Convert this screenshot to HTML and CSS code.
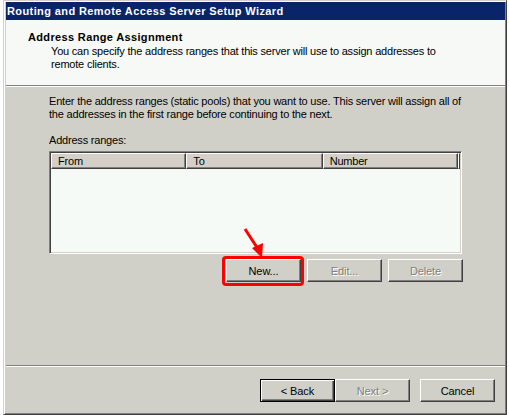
FILE: index.html
```html
<!DOCTYPE html>
<html>
<head>
<meta charset="utf-8">
<link rel="stylesheet" href="styles.css">
</head>
<body>
<div class="window">
  <div class="titlebar">Routing and Remote Access Server Setup Wizard</div>
  <div class="header">
    <div class="h-title">Address Range Assignment</div>
    <div class="h-desc">You can specify the address ranges that this server will use to assign addresses to remote clients.</div>
  </div>
  <div class="content">
    <p class="intro">Enter the address ranges (static pools) that you want to use. This server will assign all of the addresses in the first range before continuing to the next.</p>
    <div class="label">Address ranges:</div>
    <div class="list">
      <div class="list-head">
        <div class="col c1">From</div>
        <div class="col c2">To</div>
        <div class="col c3">Number</div>
        <div class="col c4"></div>
      </div>
    </div>
    <div class="list-buttons">
      <div class="highlight-wrap">
        <button class="btn">New...</button>
        <span class="highlight"></span>
        <svg class="arrow" width="30" height="34" viewBox="0 0 30 34">
          <line x1="3" y1="2" x2="16" y2="22" stroke="#ff0000" stroke-width="3"/>
          <polygon points="10,21 21,16 20,31" fill="#ff0000"/>
        </svg>
      </div>
      <button class="btn disabled">Edit...</button>
      <button class="btn disabled">Delete</button>
    </div>
  </div>
  <div class="footer">
    <button class="btn default">&lt; Back</button>
    <button class="btn disabled">Next &gt;</button>
    <button class="btn cancel">Cancel</button>
  </div>
</div>
</body>
</html>
```
FILE: styles.css
```css
html, body {
  margin: 0;
  padding: 0;
  background: #ffffff;
  width: 509px;
  height: 417px;
  overflow: hidden;
}
body {
  font-family: "Liberation Sans", Arial, sans-serif;
  font-size: 11px;
  letter-spacing: -0.2px;
  color: #000;
}
.window {
  margin-left: 3px;
  width: 504px;
  height: 415px;
  box-sizing: border-box;
  background: #d0d0c8;
  border-top: 1px solid #d4d0c8;
  border-left: 1px solid #d4d0c8;
  border-right: 1px solid #404040;
  border-bottom: 1px solid #404040;
  box-shadow: inset 1px 1px 0 #ffffff, inset -1px -1px 0 #808080;
  padding: 1px 1px 1px 2px;
  display: flex;
  flex-direction: column;
}
.titlebar {
  height: 18px;
  background: #0a246a;
  color: #fff;
  font-weight: bold;
  font-size: 11px;
  letter-spacing: 0.4px;
  line-height: 18px;
  padding-left: 1px;
}
.header {
  height: 66px;
  background: #f6f9f5;
  border-bottom: 1px solid #808080;
  box-shadow: 0 1px 0 #ffffff;
  padding-left: 22px;
  box-sizing: border-box;
  padding-top: 11px;
}
.h-title {
  font-weight: bold;
  letter-spacing: 0.35px;
  line-height: 13px;
}
.h-desc {
  margin-left: 23px;
  margin-top: 1px;
  line-height: 13px;
  width: 400px;
}
.content {
  flex: 1;
  padding-left: 43px;
  border-bottom: 1px solid #808080;
  box-shadow: 0 1px 0 #ffffff;
  margin-top: 1px;
}
.intro {
  margin: 8px 0 0 0;
  line-height: 13px;
  width: 420px;
}
.label {
  margin-top: 13px;
  line-height: 13px;
}
.list {
  margin-top: 4px;
  width: 413px;
  height: 103px;
  box-sizing: border-box;
  background: #f6faf6;
  border-top: 1px solid #808080;
  border-left: 1px solid #808080;
  border-right: 1px solid #ffffff;
  border-bottom: 1px solid #ffffff;
  box-shadow: inset 1px 1px 0 #404040, inset -1px -1px 0 #d4d0c8;
  padding: 1px;
}
.list-head {
  display: flex;
  height: 16px;
}
.col {
  box-sizing: border-box;
  height: 16px;
  background: #d4d0c8;
  border-top: 1px solid #ffffff;
  border-left: 1px solid #ffffff;
  border-right: 1px solid #404040;
  border-bottom: 1px solid #404040;
  box-shadow: inset -1px -1px 0 #808080;
  padding-left: 6px;
  line-height: 14px;
}
.c1 { width: 136px; }
.c2 { width: 137px; }
.c3 { width: 136px; }
.c4 { width: 0; flex: 1; padding: 0; }
.list-buttons {
  display: flex;
  justify-content: flex-end;
  gap: 6px;
  width: 414px;
  margin-top: 5px;
}
.btn {
  width: 75px;
  height: 23px;
  box-sizing: border-box;
  background: #d0d0c8;
  font-family: "Liberation Sans", Arial, sans-serif;
  font-size: 11px;
  letter-spacing: -0.1px;
  color: #000;
  border-top: 1px solid #ffffff;
  border-left: 1px solid #ffffff;
  border-right: 1px solid #404040;
  border-bottom: 1px solid #404040;
  box-shadow: inset -1px -1px 0 #808080;
  padding: 0;
  margin: 0;
}
.btn.disabled {
  color: #808080;
  text-shadow: 1px 1px 0 #ffffff;
}
.btn.default {
  border: 1px solid #000;
  box-shadow: inset 1px 1px 0 #ffffff, inset -1px -1px 0 #404040, inset -2px -2px 0 #808080;
}
.highlight-wrap {
  position: relative;
  display: flex;
}
.highlight {
  position: absolute;
  left: -4px;
  top: -3px;
  width: 82px;
  height: 30px;
  box-sizing: border-box;
  border: 3px solid #ff0000;
  border-radius: 4px;
}
.arrow {
  position: absolute;
  left: 16px;
  top: -32px;
}
.footer {
  height: 46px;
  box-sizing: border-box;
  display: flex;
  justify-content: flex-end;
  padding-top: 12px;
  padding-right: 10px;
  margin-top: 1px;
}
.footer .cancel {
  margin-left: 10px;
}
```
